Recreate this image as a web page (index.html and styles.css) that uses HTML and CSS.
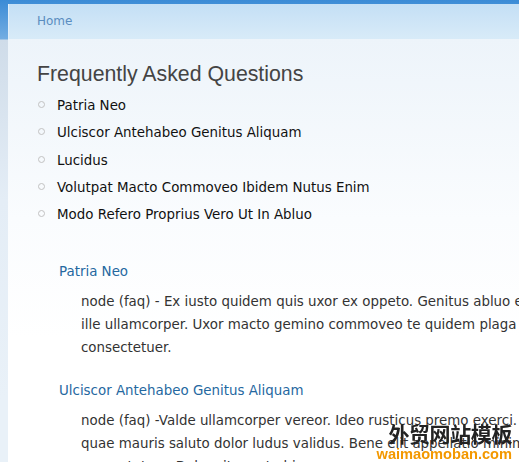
FILE: index.html
```html
<!DOCTYPE html>
<html lang="en">
<head>
    <meta charset="UTF-8">
    <meta name="viewport" content="width=device-width, initial-scale=1.0">
    <title>Frequently Asked Questions</title>
    <link rel="stylesheet" href="styles.css">
</head>
<body>
    <div class="page">
        <div class="breadcrumb">
            <a href="#">Home</a>
        </div>

        <div class="main">
            <h1>Frequently Asked Questions</h1>

            <ul class="faq-toc">
                <li><a href="#faq-1">Patria Neo</a></li>
                <li><a href="#faq-2">Ulciscor Antehabeo Genitus Aliquam</a></li>
                <li><a href="#faq-3">Lucidus</a></li>
                <li><a href="#faq-4">Volutpat Macto Commoveo Ibidem Nutus Enim</a></li>
                <li><a href="#faq-5">Modo Refero Proprius Vero Ut In Abluo</a></li>
            </ul>

            <div class="faq-entries">
                <div class="faq-entry" id="faq-1">
                    <h2><a href="#">Patria Neo</a></h2>
                    <p>node (faq) - Ex iusto quidem quis uxor ex oppeto. Genitus abluo eros gemino letalis utrum ille ullamcorper. Uxor macto gemino commoveo te quidem plaga caecus dolore consectetuer.</p>
                </div>

                <div class="faq-entry" id="faq-2">
                    <h2><a href="#">Ulciscor Antehabeo Genitus Aliquam</a></h2>
                    <p>node (faq) -Valde ullamcorper vereor. Ideo rusticus premo exerci. Sino paratus eros velit quae mauris saluto dolor ludus validus. Bene elit appellatio minim veniam typicus consectetuer. Dolor sit amet abigo.</p>
                </div>

                <div class="faq-entry" id="faq-3">
                    <h2><a href="#">Lucidus</a></h2>
                    <p>node (faq) - Appellatio distineo quibus tum. Esse iriure nulla quadrum vindico.</p>
                </div>
            </div>
        </div>
    </div>

    <div class="watermark">
        <span class="watermark-cn">外贸网站模板</span>
        <span class="watermark-en">waimaomoban.com</span>
    </div>
</body>
</html>
```

FILE: styles.css
```css
body {
    margin: 0;
    overflow-x: hidden;
    font-family: "DejaVu Sans", Verdana, sans-serif;
    font-size: 13.4px;
    color: #333;
    background: #e9f1f8 linear-gradient(#3b8bd6 0, #73ade2 39px, #cfdce9 40px, #e4edf6 200px, #e9f1f8 400px) no-repeat;
}
a {
    text-decoration: none;
}
.page {
    margin: 4px 0 0 8px;
    width: 960px;
}
.breadcrumb {
    height: 35px;
    line-height: 35px;
    padding: 0 29px;
    font-size: 12px;
    background: linear-gradient(#c4dff5, #d8ebf8);
    box-shadow: inset 1px 0 0 #e2effa;
}
.breadcrumb a {
    color: #5a8dc0;
}
.main {
    padding: 23px 29px 60px;
    background: linear-gradient(#edf4fa, #fafcfe 180px, #fff 300px);
}
h1 {
    margin: 0;
    font: normal 21.3px/24px "Liberation Sans", Arial, sans-serif;
    color: #444;
}
.faq-toc {
    list-style: none;
    margin: 6px 0 0;
    padding: 0;
}
.faq-toc li {
    position: relative;
    padding-left: 20px;
    line-height: 27.3px;
}
.faq-toc li::before {
    content: "";
    position: absolute;
    left: 1px;
    top: 9px;
    width: 5px;
    height: 5px;
    border: 1px solid #c2c2c2;
    border-radius: 50%;
}
.faq-toc a {
    color: #111;
}
.faq-entries {
    padding-top: 12px;
}
.faq-entry {
    margin-top: 22px;
}
.faq-entry h2 {
    margin: 0 0 0 22px;
    font-size: 13.4px;
    font-weight: normal;
    line-height: 20px;
}
.faq-entry h2 a {
    color: #25689f;
}
.faq-entry p {
    margin: 8px 0 0 44px;
    width: 46.15em;
    line-height: 23px;
    color: #333;
}
.watermark {
    position: fixed;
    right: 7px;
    bottom: 0;
    display: flex;
    flex-direction: column;
    align-items: flex-end;
    pointer-events: none;
}
.watermark-cn {
    font: bold 21px/25px "Noto Sans CJK SC", sans-serif;
    color: #222;
    letter-spacing: -0.4px;
}
.watermark-en {
    font: bold 14.6px/16px "Liberation Sans", Arial, sans-serif;
    color: #f39800;
}
```
